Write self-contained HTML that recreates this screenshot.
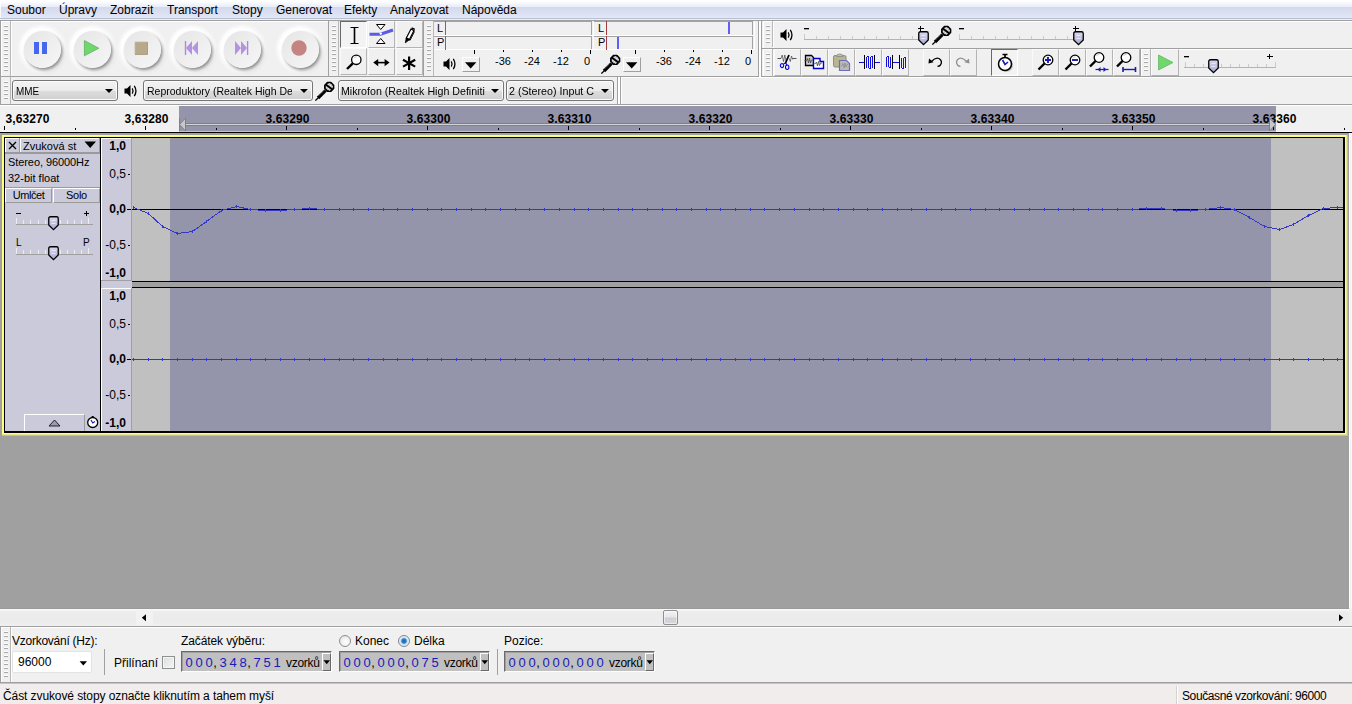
<!DOCTYPE html>
<html lang="cs">
<head>
<meta charset="utf-8">
<title>Audacity</title>
<style>
*{box-sizing:border-box;margin:0;padding:0}
html,body{width:1352px;height:704px;overflow:hidden;background:#f0f0f0;font-family:"Liberation Sans",sans-serif;font-size:12px;color:#000}
.a{position:absolute}
#menubar{left:0;top:0;width:1352px;height:19px;background:linear-gradient(#ffffff 0px,#fbfcfe 2px,#eff2fa 5px,#e8ecf7 7px,#d3d9ee 7px,#d8ddf0 11px,#e3e8f7 18px,#b9bfd3 18px,#b9bfd3 19px)}
#menubar span{position:absolute;top:3px;font-size:12px;white-space:nowrap;line-height:14px}
.tb{background:#f0f0f0;border-right:1px solid #a0a0a0;border-bottom:1px solid #a0a0a0}
.grab{background:repeating-linear-gradient(#ffffff 0,#ffffff 1px,#a8a8a8 1px,#a8a8a8 2px,#f0f0f0 2px,#f0f0f0 4px);}
.lbl{font-size:12px;white-space:nowrap;line-height:14px}
.combo{border:1px solid #757575;border-radius:3px;background:linear-gradient(#f2f2f2 0%,#ebebeb 50%,#dddddd 51%,#cfcfcf 100%);font-size:12px;line-height:17px;white-space:nowrap;overflow:hidden;padding-left:3px;box-shadow:inset 0 0 0 1px #fcfcfc}
.arrow{width:0;height:0;border-left:4px solid transparent;border-right:4px solid transparent;border-top:4px solid #000}
</style>
</head>
<body>
<!-- MENU -->
<div id="menubar" class="a">
<i class="a" style="left:0;top:0;width:1px;height:18px;background:rgba(255,255,255,.8)"></i><span style="left:7px">Soubor</span>
<span style="left:59px">Úpravy</span>
<span style="left:110px">Zobrazit</span>
<span style="left:167px">Transport</span>
<span style="left:232px">Stopy</span>
<span style="left:276px">Generovat</span>
<span style="left:344px">Efekty</span>
<span style="left:390px">Analyzovat</span>
<span style="left:462px">Nápověda</span>
</div>
<div class="a" style="left:0;top:19px;width:1352px;height:1px;background:#f0f0f0"></div>
<div class="a" style="left:0;top:20px;width:1352px;height:1px;background:#a0a0a0"></div>

<!-- TOOLBARS placeholder -->
<div id="toolbars" class="a" style="left:0;top:21px;width:1352px;height:83px">
<style>
.rb{position:absolute;width:52px;height:52px;border-radius:50%;background:radial-gradient(circle at 50% 50%,rgba(255,255,255,0) 0,rgba(255,255,255,0) 17.5px,rgba(255,255,255,.75) 20.5px,rgba(255,255,255,.5) 22.5px,rgba(255,255,255,.15) 24.5px,rgba(255,255,255,0) 26px)}
.rb i{position:absolute;left:8.3px;top:8.5px;width:37px;height:37px;border-radius:50%;background:linear-gradient(135deg,#e7e7e7 12%,#eeeeee 50%,#f4f4f4 88%);box-shadow:1.5px 2px 3px rgba(0,0,0,.36),3px 3.5px 4px rgba(0,0,0,.10),-2px -2px 2.5px 1.5px rgba(255,255,255,.85);filter:blur(.6px)}
.tbtn{position:absolute;width:27px;height:27px;background:#f0f0f0;border-right:1px solid #b4b4b4;border-bottom:1px solid #b4b4b4;border-left:1px solid #fafafa;border-top:1px solid #fafafa}
</style>
<!-- transport toolbar -->
<div class="a tb" style="left:0;top:0;width:329px;height:56px;border-left:1px solid #a0a0a0">
 <div class="a grab" style="left:3px;top:4px;width:4px;height:48px"></div>
 <div class="a" style="left:9px;top:0;width:1px;height:55px;background:#b8b8b8"></div>
 <div class="rb" style="left:14.5px;top:1.5px"><i></i></div>
 <div class="rb" style="left:64.5px;top:1.5px"><i></i></div>
 <div class="rb" style="left:114.5px;top:1.5px"><i></i></div>
 <div class="rb" style="left:164.5px;top:1.5px"><i></i></div>
 <div class="rb" style="left:215px;top:1.5px"><i></i></div>
 <div class="rb" style="left:272.5px;top:1.5px"><i></i></div>
<svg class="a" style="left:-1px;top:0" width="329" height="55">
<rect x="34" y="21" width="5" height="12" fill="#4667ec"/><rect x="42" y="21" width="5" height="12" fill="#4667ec"/>
<path d="M84.4 19.6 L98.8 27.200000000000003 L84.4 34.8 Z" fill="#70d66e" stroke="#5fb45e" stroke-width="0.8"/>
<rect x="135" y="21" width="12.5" height="12.5" fill="#b8a98c"/><path d="M135 33.5V21H147.5" stroke="#c6b89e" stroke-width="0.8" fill="none"/><path d="M135 33.5H147.5V21" stroke="#a39377" stroke-width="0.8" fill="none"/>
<path d="M185.5 20V34" stroke="#a989dc" stroke-width="1.4"/><path d="M192 20 L186 27 L192 34Z M198 20 L192 27 L198 34Z" fill="#b294e2"/>
<path d="M247.6 20V34" stroke="#a989dc" stroke-width="1.4"/><path d="M235 20 L241 27 L235 34Z M241 20 L247 27 L241 34Z" fill="#b294e2"/>
<circle cx="299" cy="27" r="7.7" fill="#c48482"/>
</svg>
</div>

<svg width="0" height="0" style="position:absolute"><defs><linearGradient id="tg" x1="0" y1="0" x2="0" y2="1"><stop offset="0" stop-color="#d8d8ee"/><stop offset="0.45" stop-color="#c4c4e2"/><stop offset="1" stop-color="#a8a8d2"/></linearGradient></defs></svg><style>.m11{font-size:11px;line-height:13px;white-space:nowrap}</style>
<div class="a" style="left:1px;top:0px;width:1px;height:55px;background:#fff"></div><div class="a" style="left:11px;top:0px;width:1px;height:55px;background:#fff"></div><div class="a" style="left:1px;top:0px;width:9px;height:1px;background:#fff"></div><div class="a" style="left:329px;top:0px;width:1px;height:55px;background:#fff"></div><div class="a" style="left:339px;top:0px;width:1px;height:55px;background:#fff"></div><div class="a" style="left:329px;top:0px;width:9px;height:1px;background:#fff"></div><div class="a" style="left:424px;top:0px;width:1px;height:55px;background:#fff"></div><div class="a" style="left:434px;top:0px;width:1px;height:55px;background:#fff"></div><div class="a" style="left:424px;top:0px;width:9px;height:1px;background:#fff"></div><div class="a" style="left:11px;top:0px;width:317px;height:1px;background:#fff"></div><div class="a" style="left:763px;top:0px;width:1px;height:27px;background:#fff"></div><div class="a" style="left:773px;top:0px;width:1px;height:27px;background:#fff"></div><div class="a" style="left:763px;top:0px;width:9px;height:1px;background:#fff"></div><div class="a" style="left:773px;top:0px;width:579px;height:1px;background:#fff"></div><div class="a" style="left:763px;top:28px;width:1px;height:27px;background:#fff"></div><div class="a" style="left:763px;top:28px;width:9px;height:1px;background:#fff"></div><div class="a" style="left:1141px;top:28px;width:1px;height:27px;background:#fff"></div><div class="a" style="left:1141px;top:28px;width:9px;height:1px;background:#fff"></div><div class="a" style="left:1179px;top:28px;width:173px;height:1px;background:#fff"></div><div class="a" style="left:1px;top:56px;width:1px;height:27px;background:#fff"></div><div class="a" style="left:11px;top:56px;width:1px;height:27px;background:#fff"></div><div class="a" style="left:1px;top:56px;width:9px;height:1px;background:#fff"></div><div class="a" style="left:11px;top:56px;width:607px;height:1px;background:#fff"></div>
<!-- tools toolbar -->
<div class="a tb" style="left:329px;top:0;width:95px;height:56px">
 <div class="a grab" style="left:3px;top:4px;width:4px;height:48px"></div>
 <div class="a" style="left:9px;top:0;width:1px;height:55px;background:#b8b8b8"></div>
</div>
<div class="tbtn" style="left:340px;top:0px;border-top:1px solid #696969;border-left:1px solid #696969;border-right:1px solid #fff;border-bottom:1px solid #fff;background:#f3f3f3"><svg class="a" style="left:-1px;top:-1px" width="27" height="27"><path d="M10.5 6.5h8M10.5 22.5h8" stroke="#000" stroke-width="1.2"/><path d="M14.5 6.5v16" stroke="#000" stroke-width="1.6"/></svg></div><div class="tbtn" style="left:368px;top:0px;"><svg class="a" style="left:-1px;top:-1px" width="27" height="27"><path d="M8.5 3.5h8.5l-4.25 5z M8.5 22.5h8.5l-4.25 -5z" fill="#fff" stroke="#000" stroke-width="1"/><path d="M1.5 13.3 H12.5 L25 9" stroke="#5c5ce0" stroke-width="3.1" fill="none"/><circle cx="12.8" cy="12.6" r="1.2" fill="#fff"/></svg></div><div class="tbtn" style="left:396px;top:0px;"><svg class="a" style="left:-1px;top:-1px" width="27" height="27"><path d="M10.3 17 L15 8 L18 9.6 L13.4 18.6 Z" fill="#fff" stroke="#000" stroke-width="1.2"/><path d="M9.3 21.8 L10.3 16.8 L13.6 18.6Z" fill="#000" stroke="#000" stroke-width="0.8"/><path d="M15.6 6.8 L18.8 8.4" stroke="#000" stroke-width="1.3"/><path d="M14 19.5 L18.5 10.5" stroke="#000" stroke-width="0.9"/></svg></div><div class="tbtn" style="left:340px;top:27px;"><svg class="a" style="left:-1px;top:-1px" width="27" height="27"><circle cx="16.3" cy="11.8" r="4.7" fill="#fff" stroke="#000" stroke-width="1.3"/><path d="M12.8 15.3 L7 21" stroke="#000" stroke-width="2.4"/><path d="M13.8 10.3 Q14.8 8.6 16.8 8.6" stroke="#bbb" stroke-width="0.8" fill="none"/></svg></div><div class="tbtn" style="left:368px;top:27px;"><svg class="a" style="left:-1px;top:-1px" width="27" height="27"><path d="M7 14.6 H20" stroke="#000" stroke-width="1.6"/><path d="M5.2 14.6 L10.2 11 V18.2Z M21.6 14.6 L16.6 11 V18.2Z" fill="#000"/></svg></div><div class="tbtn" style="left:396px;top:27px;"><svg class="a" style="left:-1px;top:-1px" width="27" height="27"><path d="M13.1 8.4 V22 M7 11.8 L19.2 18.6 M19.2 11.8 L7 18.6" stroke="#000" stroke-width="2.2"/></svg></div>
<!-- meter toolbar -->
<div class="a tb" style="left:424px;top:0;width:335px;height:56px">
 <div class="a grab" style="left:3px;top:4px;width:4px;height:48px"></div>
 <div class="a" style="left:9px;top:0;width:1px;height:55px;background:#b8b8b8"></div>
</div>
<div class="a" style="left:0;top:0"><div class="a" style="left:434px;top:0px;width:158px;height:1px;background:#a3a3a3"></div><div class="a" style="left:434px;top:14px;width:160px;height:1px;background:#fff"></div><div class="a" style="left:445px;top:0px;width:1px;height:14px;background:#2c9a2c"></div><div class="a" style="left:591px;top:1px;width:1px;height:13px;background:#a3a3a3"></div><div class="a" style="left:593px;top:1px;width:1px;height:14px;background:#fff"></div><div class="a" style="left:434px;top:15px;width:158px;height:1px;background:#a3a3a3"></div><div class="a" style="left:434px;top:28px;width:160px;height:1px;background:#fff"></div><div class="a" style="left:445px;top:15px;width:1px;height:14px;background:#2c9a2c"></div><div class="a" style="left:591px;top:16px;width:1px;height:12px;background:#a3a3a3"></div><div class="a" style="left:593px;top:16px;width:1px;height:13px;background:#fff"></div><div class="a m11" style="left:437px;top:1px">L</div><div class="a m11" style="left:437px;top:15px">P</div><div class="a" style="left:474px;top:29px;width:1px;height:4px;background:#000"></div><div class="a" style="left:503px;top:29px;width:1px;height:2px;background:#000"></div><div class="a m11" style="left:494px;top:34px;width:18px;text-align:center">-36</div><div class="a" style="left:532px;top:29px;width:1px;height:2px;background:#000"></div><div class="a m11" style="left:523px;top:34px;width:18px;text-align:center">-24</div><div class="a" style="left:561px;top:29px;width:1px;height:2px;background:#000"></div><div class="a m11" style="left:552px;top:34px;width:18px;text-align:center">-12</div><div class="a" style="left:590px;top:29px;width:1px;height:4px;background:#000"></div><div class="a m11" style="left:584px;top:34px">0</div><svg class="a" style="left:443px;top:36px" width="14" height="14" viewBox="0 0 14 14"><path d="M0.5 4.5 H3 L6.5 1 V13 L3 9.5 H0.5Z" fill="#000"/><path d="M8.3 4.4 Q9.8 7 8.3 9.6" stroke="#000" stroke-width="1.2" fill="none"/><path d="M10.3 1.8 Q13.6 7 10.3 12.2" stroke="#000" stroke-width="1.3" fill="none"/></svg><div class="a" style="left:462px;top:36px;width:18px;height:15px;border-top:1px solid #fff;border-left:1px solid #fff;border-right:1px solid #a0a0a0;border-bottom:1px solid #a0a0a0"><svg class="a" style="left:2px;top:4px" width="12" height="7"><path d="M0 0.3 H11.4 L5.7 6.4Z" fill="#000"/></svg></div><div class="a" style="left:594px;top:0px;width:159px;height:1px;background:#a3a3a3"></div><div class="a" style="left:594px;top:14px;width:161px;height:1px;background:#fff"></div><div class="a" style="left:606px;top:0px;width:1px;height:14px;background:#a33c3c"></div><div class="a" style="left:752px;top:1px;width:1px;height:13px;background:#a3a3a3"></div><div class="a" style="left:754px;top:1px;width:1px;height:14px;background:#fff"></div><div class="a" style="left:594px;top:15px;width:159px;height:1px;background:#a3a3a3"></div><div class="a" style="left:594px;top:28px;width:161px;height:1px;background:#fff"></div><div class="a" style="left:606px;top:15px;width:1px;height:14px;background:#a33c3c"></div><div class="a" style="left:752px;top:16px;width:1px;height:12px;background:#a3a3a3"></div><div class="a" style="left:754px;top:16px;width:1px;height:13px;background:#fff"></div><div class="a m11" style="left:598px;top:1px">L</div><div class="a m11" style="left:598px;top:15px">P</div><div class="a" style="left:635px;top:29px;width:1px;height:4px;background:#000"></div><div class="a" style="left:664px;top:29px;width:1px;height:2px;background:#000"></div><div class="a m11" style="left:655px;top:34px;width:18px;text-align:center">-36</div><div class="a" style="left:693px;top:29px;width:1px;height:2px;background:#000"></div><div class="a m11" style="left:684px;top:34px;width:18px;text-align:center">-24</div><div class="a" style="left:722px;top:29px;width:1px;height:2px;background:#000"></div><div class="a m11" style="left:713px;top:34px;width:18px;text-align:center">-12</div><div class="a" style="left:751px;top:29px;width:1px;height:4px;background:#000"></div><div class="a m11" style="left:745px;top:34px">0</div><svg class="a" style="left:601px;top:33px" width="20" height="20" viewBox="0 0 20 20"><path d="M12.5 1.7 h3.4 l2.6 2.6 v3.2 l-2.6 2.6 h-3.4 l-2.6 -2.6 v-3.2z" fill="#c4c4c4" stroke="#000" stroke-width="1.7" stroke-linejoin="round"/><path d="M13.2 3.6 l1.6 -1.2 M15 5 l1.6 -1.4 M16.6 6.4 l1.2 -1 M11.2 7 l1.2 -1.1 M12.8 8.4 l1.4 -1.2 M14.2 9.6 l1 -0.8" stroke="#f4f4f4" stroke-width="0.9"/><path d="M10.8 3.4 L17.4 8.4" stroke="#000" stroke-width="1.9"/><path d="M10.6 9.4 L3 17" stroke="#000" stroke-width="3.3"/><path d="M9.6 8.6 L4 14.4" stroke="#fff" stroke-width="0.8" stroke-dasharray="0.9 0.9"/><path d="M3.6 16.4 L0.4 19.6" stroke="#000" stroke-width="1.3"/></svg><div class="a" style="left:623px;top:36px;width:18px;height:15px;border-top:1px solid #fff;border-left:1px solid #fff;border-right:1px solid #a0a0a0;border-bottom:1px solid #a0a0a0"><svg class="a" style="left:2px;top:4px" width="12" height="7"><path d="M0 0.3 H11.4 L5.7 6.4Z" fill="#000"/></svg></div>
<div class="a" style="left:617px;top:16px;width:2px;height:12px;background:#5e5eff"></div>
<div class="a" style="left:728px;top:1px;width:2px;height:12px;background:#5e5eff"></div>
</div>
<div class="a" style="left:759px;top:0;width:2px;height:56px;background:#fff"></div>
<div class="a" style="left:761px;top:0;width:1px;height:56px;background:#a0a0a0"></div>
<!-- mixer toolbar -->
<div class="a" style="left:762px;top:0;width:590px;height:28px;border-bottom:1px solid #a0a0a0">
 <div class="a grab" style="left:4px;top:4px;width:4px;height:19px"></div>
 <div class="a" style="left:10px;top:0;width:1px;height:26px;background:#b8b8b8"></div>
</div>
<svg class="a" style="left:780px;top:7px" width="14" height="14" viewBox="0 0 14 14"><path d="M0.5 4.5 H3 L6.5 1 V13 L3 9.5 H0.5Z" fill="#000"/><path d="M8.3 4.4 Q9.8 7 8.3 9.6" stroke="#000" stroke-width="1.2" fill="none"/><path d="M10.3 1.8 Q13.6 7 10.3 12.2" stroke="#000" stroke-width="1.3" fill="none"/></svg>
<div class="a" style="left:804px;top:7px;width:5px;height:1px;background:#000;box-shadow:0 0.5px 0 #555"></div>
<div class="a" style="left:804px;top:18px;width:117px;height:1px;background:#b4b4b4"></div>
<div class="a" style="left:804px;top:13px;width:1px;height:5px;background:#cbcbcb"></div><div class="a" style="left:816px;top:15px;width:1px;height:3px;background:#cbcbcb"></div><div class="a" style="left:828px;top:15px;width:1px;height:3px;background:#cbcbcb"></div><div class="a" style="left:840px;top:15px;width:1px;height:3px;background:#cbcbcb"></div><div class="a" style="left:852px;top:15px;width:1px;height:3px;background:#cbcbcb"></div><div class="a" style="left:864px;top:15px;width:1px;height:3px;background:#cbcbcb"></div><div class="a" style="left:876px;top:15px;width:1px;height:3px;background:#cbcbcb"></div><div class="a" style="left:888px;top:15px;width:1px;height:3px;background:#cbcbcb"></div><div class="a" style="left:900px;top:15px;width:1px;height:3px;background:#cbcbcb"></div><div class="a" style="left:912px;top:15px;width:1px;height:3px;background:#cbcbcb"></div>
<svg class="a" style="left:918px;top:4px" width="6" height="6"><path d="M0 3.5h6M2.5 1v5" stroke="#000" stroke-width="1" shape-rendering="crispEdges"/></svg>
<svg class="a" style="left:918px;top:10px" width="12" height="15" viewBox="0 0 12 15"><path d="M2.5 0.75 H8.5 Q10.25 0.75 10.25 2.5 V9 L5.5 13.6 L0.75 9 V2.5 Q0.75 0.75 2.5 0.75Z" fill="url(#tg)" stroke="#000" stroke-width="1.3"/><path d="M3.5 4.5h4M3.5 7.5h4" stroke="#e8e8f6" stroke-width="1"/></svg><svg class="a" style="left:932px;top:4px" width="20" height="20" viewBox="0 0 20 20"><path d="M12.5 1.7 h3.4 l2.6 2.6 v3.2 l-2.6 2.6 h-3.4 l-2.6 -2.6 v-3.2z" fill="#c4c4c4" stroke="#000" stroke-width="1.7" stroke-linejoin="round"/><path d="M13.2 3.6 l1.6 -1.2 M15 5 l1.6 -1.4 M16.6 6.4 l1.2 -1 M11.2 7 l1.2 -1.1 M12.8 8.4 l1.4 -1.2 M14.2 9.6 l1 -0.8" stroke="#f4f4f4" stroke-width="0.9"/><path d="M10.8 3.4 L17.4 8.4" stroke="#000" stroke-width="1.9"/><path d="M10.6 9.4 L3 17" stroke="#000" stroke-width="3.3"/><path d="M9.6 8.6 L4 14.4" stroke="#fff" stroke-width="0.8" stroke-dasharray="0.9 0.9"/><path d="M3.6 16.4 L0.4 19.6" stroke="#000" stroke-width="1.3"/></svg>
<div class="a" style="left:959px;top:7px;width:5px;height:1px;background:#000;box-shadow:0 0.5px 0 #555"></div>
<div class="a" style="left:959px;top:18px;width:117px;height:1px;background:#b4b4b4"></div>
<div class="a" style="left:959px;top:13px;width:1px;height:5px;background:#cbcbcb"></div><div class="a" style="left:971px;top:15px;width:1px;height:3px;background:#cbcbcb"></div><div class="a" style="left:983px;top:15px;width:1px;height:3px;background:#cbcbcb"></div><div class="a" style="left:995px;top:15px;width:1px;height:3px;background:#cbcbcb"></div><div class="a" style="left:1007px;top:15px;width:1px;height:3px;background:#cbcbcb"></div><div class="a" style="left:1019px;top:15px;width:1px;height:3px;background:#cbcbcb"></div><div class="a" style="left:1031px;top:15px;width:1px;height:3px;background:#cbcbcb"></div><div class="a" style="left:1043px;top:15px;width:1px;height:3px;background:#cbcbcb"></div><div class="a" style="left:1055px;top:15px;width:1px;height:3px;background:#cbcbcb"></div><div class="a" style="left:1067px;top:15px;width:1px;height:3px;background:#cbcbcb"></div>
<svg class="a" style="left:1073px;top:4px" width="6" height="6"><path d="M0 3.5h6M2.5 1v5" stroke="#000" stroke-width="1" shape-rendering="crispEdges"/></svg>
<svg class="a" style="left:1073px;top:10px" width="12" height="15" viewBox="0 0 12 15"><path d="M2.5 0.75 H8.5 Q10.25 0.75 10.25 2.5 V9 L5.5 13.6 L0.75 9 V2.5 Q0.75 0.75 2.5 0.75Z" fill="url(#tg)" stroke="#000" stroke-width="1.3"/><path d="M3.5 4.5h4M3.5 7.5h4" stroke="#e8e8f6" stroke-width="1"/></svg>
<!-- edit toolbar -->
<div class="a" style="left:762px;top:28px;width:379px;height:28px;border-bottom:1px solid #a0a0a0;border-right:1px solid #a0a0a0">
 <div class="a grab" style="left:4px;top:4px;width:4px;height:20px"></div>
 <div class="a" style="left:10px;top:0;width:1px;height:28px;background:#b8b8b8"></div>
</div>
<div class="tbtn" style="left:774px;top:28px;"><svg class="a" style="left:-2px;top:-2px" width="27" height="27"><path d="M4.5 10.5 H8" stroke="#555" stroke-width="1"/><path d="M19.5 10.5 H23.5" stroke="#555" stroke-width="1"/><path d="M8 10.5 l1.2 -3.5 l1.3 6.5 l1.3 -6.5 l1.2 5.5 M16.3 10.5 l1 3 l1.2 -5.5 l1.2 3.5" stroke="#444" stroke-width="0.7" fill="none"/><path d="M16 7 L12.5 15" stroke="#000" stroke-width="1.8"/><ellipse cx="9" cy="17.6" rx="1.7" ry="2" fill="none" stroke="#0000d8" stroke-width="1.05"/><ellipse cx="14.2" cy="19.2" rx="1.7" ry="2.2" fill="none" stroke="#0000d8" stroke-width="1.05"/><path d="M12.5 15 L10.5 16 M12.8 15 L13.8 17" stroke="#0000d8" stroke-width="1.1"/></svg></div><div class="tbtn" style="left:801px;top:28px;"><svg class="a" style="left:-2px;top:-2px" width="27" height="27"><path d="M5.5 7.5 H11.5 L13.5 9.5 V17.5 H5.5Z" fill="#cfcfcf" stroke="#000" stroke-width="1.3"/><path d="M4.5 12.5 h2 l1 -2 l1 4.5 l1 -5 l1 5 l1 -3 h1" stroke="#444" stroke-width="0.8" fill="none"/><path d="M13.5 10.5 H20 V13.5 H23.5 V20.5 H13.5Z" fill="#fff" stroke="#0000d0" stroke-width="1.4"/><path d="M14.5 15.5 h1 l1 -1.5 l1 4 l1 -4.5 l1 4 l1 -2.5 h1.5" stroke="#444" stroke-width="0.8" fill="none"/></svg></div><div class="tbtn" style="left:828px;top:28px;"><svg class="a" style="left:-2px;top:-2px" width="27" height="27"><rect x="6.5" y="7.5" width="12.5" height="11.5" rx="1.5" fill="#b9b58f" stroke="#8c8c8c" stroke-width="1"/><path d="M9.5 8.5 Q9.5 6 12.7 6 Q16 6 16 8.5Z" fill="#c9c38a" stroke="#8c8c8c" stroke-width="0.9"/><path d="M12.5 12.5 H19.5 L22.5 15.5 V22.5 H12.5Z" fill="#b9b9b9" stroke="#6e6eb4" stroke-width="1.2"/><path d="M14 17.5 h1 l1 -2 l1 4.5 l1 -5 l1 4 l1 -2.5 h1" stroke="#8e8e8e" stroke-width="0.8" fill="none"/></svg></div><div class="tbtn" style="left:855px;top:28px;"><svg class="a" style="left:-2px;top:-2px" width="27" height="27"><g shape-rendering="crispEdges"><path d="M5 14.5H10 M21 14.5H26" stroke="#1010d8" stroke-width="1"/><path d="M12.5 9V20M12.5 8.5H14.5M14.5 9V20M14.5 20.5H16.5M16.5 9V20M16.5 8.5H18.5M18.5 9V20" stroke="#1010d8" stroke-width="1" fill="none"/><path d="M10.5 7V21M20.5 7V21" stroke="#000" stroke-width="1.5"/></g></svg></div><div class="tbtn" style="left:882px;top:28px;"><svg class="a" style="left:-2px;top:-2px" width="27" height="27"><g shape-rendering="crispEdges"><path d="M12 14.5H18" stroke="#1010d8" stroke-width="1"/><path d="M5.5 9V19M5.5 8.5H7.5M7.5 9V19M7.5 19.5H9.5M9.5 9V19M20.5 10V20M20.5 20.5H22.5M22.5 10V20M22.5 9.5H24.5M24.5 10V20" stroke="#1010d8" stroke-width="1" fill="none"/><path d="M11.5 7V21M18.5 7V21" stroke="#000" stroke-width="1.5"/></g></svg></div><div class="tbtn" style="left:923px;top:28px;"><svg class="a" style="left:-1px;top:-2px" width="27" height="27"><path d="M8.5 13.5 Q12.5 9 16 10.5 Q20 13 17.5 17 Q16.5 18.3 14.5 18.3" stroke="#000" stroke-width="1.3" fill="none"/><path d="M5.5 15.5 L6 10.5 L10.5 14.2Z" fill="#000"/></svg></div><div class="tbtn" style="left:950px;top:28px;"><svg class="a" style="left:-1px;top:-2px" width="27" height="27"><g transform="translate(-2,0)"><path d="M18.5 13.5 Q14.5 9 11 10.5 Q7 13 9.5 17 Q10.5 18.3 12.5 18.3" stroke="#909090" stroke-width="1.3" fill="none"/><path d="M21.5 15.5 L21 10.5 L16.5 14.2Z" fill="#909090"/></g></svg></div><div class="tbtn" style="left:991px;top:28px;border-top:1px solid #696969;border-left:1px solid #696969;border-right:1px solid #fff;border-bottom:1px solid #fff;background:#f3f3f3"><svg class="a" style="left:-1px;top:-2px" width="27" height="27"><circle cx="15.3" cy="17.3" r="6.8" fill="#c8c8c8"/><circle cx="14" cy="16" r="6.5" fill="#fff" stroke="#000" stroke-width="1.5"/><path d="M11.5 6.5 H16.5 M14 6.5 V9.5" stroke="#000" stroke-width="1.7"/><path d="M11.5 12 L14 16.5 L17 14" stroke="#1a1ab8" stroke-width="1.6" fill="none"/></svg></div><div class="tbtn" style="left:1032px;top:28px;"><svg class="a" style="left:-1px;top:-2px" width="27" height="27"><g transform="translate(-0.5,2)"><circle cx="16.5" cy="10" r="4.8" fill="#fff" stroke="#000" stroke-width="1.3"/><path d="M13 13.5 L7 19.5" stroke="#000" stroke-width="2.4"/><path d="M14 8.5 Q15 6.8 17 6.8" stroke="#bbb" stroke-width="0.8" fill="none"/><path d="M13.5 10 H19.5 M16.5 7 V13" stroke="#1a1ab0" stroke-width="1.9"/></g></svg></div><div class="tbtn" style="left:1059px;top:28px;"><svg class="a" style="left:-1px;top:-2px" width="27" height="27"><g transform="translate(-0.5,2)"><circle cx="16.5" cy="10" r="4.8" fill="#fff" stroke="#000" stroke-width="1.3"/><path d="M13 13.5 L7 19.5" stroke="#000" stroke-width="2.4"/><path d="M14 8.5 Q15 6.8 17 6.8" stroke="#bbb" stroke-width="0.8" fill="none"/><path d="M13.5 10 H19.5" stroke="#1a1ab0" stroke-width="1.9"/></g></svg></div><div class="tbtn" style="left:1086px;top:28px;"><svg class="a" style="left:-1px;top:-2px" width="27" height="27"><g transform="translate(-0.5,1)"><circle cx="13.5" cy="8.5" r="4.8" fill="#fff" stroke="#000" stroke-width="1.3"/><path d="M10 12 L4.5 17.5" stroke="#000" stroke-width="2.4"/><path d="M11 7 Q12 5.3 14 5.3" stroke="#bbb" stroke-width="0.8" fill="none"/><path d="M10 20.5 H23" stroke="#1a1ab0" stroke-width="1.2"/><path d="M12 20.5 L15 18 V23Z M21 20.5 L18 18 V23Z" fill="#1a1ab0"/></g></svg></div><div class="tbtn" style="left:1113px;top:28px;"><svg class="a" style="left:-1px;top:-2px" width="27" height="27"><g transform="translate(-0.5,1)"><circle cx="13.5" cy="8.5" r="4.8" fill="#fff" stroke="#000" stroke-width="1.3"/><path d="M10 12 L4.5 17.5" stroke="#000" stroke-width="2.4"/><path d="M11 7 Q12 5.3 14 5.3" stroke="#bbb" stroke-width="0.8" fill="none"/><path d="M10.5 20.5 H23" stroke="#1a1ab0" stroke-width="1.4"/><path d="M10.5 18 V23 M23 18 V23" stroke="#1a1ab0" stroke-width="1.6"/></g></svg></div>
<div class="a" style="left:773px;top:28px;width:1px;height:27px;background:#fafafa"></div>
<!-- transcription toolbar -->
<div class="a" style="left:1141px;top:28px;width:211px;height:28px;border-bottom:1px solid #a0a0a0">
 <div class="a grab" style="left:3px;top:4px;width:4px;height:20px"></div>
 <div class="a" style="left:9px;top:0;width:1px;height:28px;background:#b8b8b8"></div>
</div>
<div class="tbtn" style="left:1151px;top:28px;width:28px"><svg class="a" style="left:-1px;top:-1px" width="27" height="27"><path d="M7.5 6 L22 13.5 L7.5 21Z" fill="#70d66e" stroke="#62b961" stroke-width="0.8"/></svg></div>
<div class="a" style="left:1184px;top:35px;width:5px;height:1px;background:#000;box-shadow:0 0.5px 0 #555"></div>
<div class="a" style="left:1184px;top:46px;width:92px;height:1px;background:#b4b4b4"></div>
<div class="a" style="left:1185px;top:41px;width:1px;height:5px;background:#cbcbcb"></div><div class="a" style="left:1194px;top:43px;width:1px;height:3px;background:#cbcbcb"></div><div class="a" style="left:1203px;top:43px;width:1px;height:3px;background:#cbcbcb"></div><div class="a" style="left:1212px;top:43px;width:1px;height:3px;background:#cbcbcb"></div><div class="a" style="left:1221px;top:43px;width:1px;height:3px;background:#cbcbcb"></div><div class="a" style="left:1230px;top:43px;width:1px;height:3px;background:#cbcbcb"></div><div class="a" style="left:1239px;top:43px;width:1px;height:3px;background:#cbcbcb"></div><div class="a" style="left:1248px;top:43px;width:1px;height:3px;background:#cbcbcb"></div><div class="a" style="left:1257px;top:43px;width:1px;height:3px;background:#cbcbcb"></div><div class="a" style="left:1266px;top:43px;width:1px;height:3px;background:#cbcbcb"></div><div class="a" style="left:1275px;top:41px;width:1px;height:5px;background:#cbcbcb"></div>
<svg class="a" style="left:1267px;top:32px" width="6" height="6"><path d="M0 3.5h6M2.5 1v5" stroke="#000" stroke-width="1" shape-rendering="crispEdges"/></svg>
<svg class="a" style="left:1208px;top:38px" width="12" height="15" viewBox="0 0 12 15"><path d="M2.5 0.75 H8.5 Q10.25 0.75 10.25 2.5 V9 L5.5 13.6 L0.75 9 V2.5 Q0.75 0.75 2.5 0.75Z" fill="url(#tg)" stroke="#000" stroke-width="1.3"/><path d="M3.5 4.5h4M3.5 7.5h4" stroke="#e8e8f6" stroke-width="1"/></svg>
<!-- device toolbar -->
<div class="a tb" style="left:0;top:56px;width:618px;height:28px;border-left:1px solid #a0a0a0">
 <div class="a grab" style="left:3px;top:4px;width:4px;height:20px"></div>
 <div class="a" style="left:9px;top:0;width:1px;height:27px;background:#b8b8b8"></div>
</div>
<div class="a" style="left:618px;top:56px;width:2px;height:27px;background:#fff"></div><div class="a" style="left:620px;top:56px;width:1px;height:27px;background:#a0a0a0"></div><div class="a" style="left:621px;top:56px;width:1px;height:27px;background:#fff"></div><div class="a" style="left:621px;top:56px;width:731px;height:1px;background:#fff"></div>
<div class="a" style="left:619px;top:83px;width:733px;height:1px;background:#a0a0a0"></div>
<div class="a combo" style="left:12px;top:59px;width:106px;height:21px;font-size:11.5px;line-height:20px;padding-left:3px"><div style="width:60px;overflow:hidden"><span style="display:inline-block;transform:scaleX(0.861);transform-origin:0 50%">MME</span></div><div class="a arrow" style="right:4px;top:8px"></div></div>
<svg class="a" style="left:124px;top:63px" width="14" height="14" viewBox="0 0 14 14"><path d="M0.5 4.5 H3 L6.5 1 V13 L3 9.5 H0.5Z" fill="#000"/><path d="M8.3 4.4 Q9.8 7 8.3 9.6" stroke="#000" stroke-width="1.2" fill="none"/><path d="M10.3 1.8 Q13.6 7 10.3 12.2" stroke="#000" stroke-width="1.3" fill="none"/></svg>
<div class="a combo" style="left:143px;top:59px;width:170px;height:21px;font-size:11.5px;line-height:20px;padding-left:3px"><div style="width:145px;overflow:hidden"><span style="display:inline-block;transform:scaleX(0.913);transform-origin:0 50%">Reproduktory (Realtek High De</span></div><div class="a arrow" style="right:4px;top:8px"></div></div>
<svg class="a" style="left:315px;top:60px" width="20" height="20" viewBox="0 0 20 20"><path d="M12.5 1.7 h3.4 l2.6 2.6 v3.2 l-2.6 2.6 h-3.4 l-2.6 -2.6 v-3.2z" fill="#c4c4c4" stroke="#000" stroke-width="1.7" stroke-linejoin="round"/><path d="M13.2 3.6 l1.6 -1.2 M15 5 l1.6 -1.4 M16.6 6.4 l1.2 -1 M11.2 7 l1.2 -1.1 M12.8 8.4 l1.4 -1.2 M14.2 9.6 l1 -0.8" stroke="#f4f4f4" stroke-width="0.9"/><path d="M10.8 3.4 L17.4 8.4" stroke="#000" stroke-width="1.9"/><path d="M10.6 9.4 L3 17" stroke="#000" stroke-width="3.3"/><path d="M9.6 8.6 L4 14.4" stroke="#fff" stroke-width="0.8" stroke-dasharray="0.9 0.9"/><path d="M3.6 16.4 L0.4 19.6" stroke="#000" stroke-width="1.3"/></svg>
<div class="a combo" style="left:338px;top:59px;width:166px;height:21px;font-size:11.5px;line-height:20px;padding-left:2px"><div style="width:150px;overflow:hidden"><span style="display:inline-block;transform:scaleX(0.926);transform-origin:0 50%">Mikrofon (Realtek High Definiti</span></div><div class="a arrow" style="right:4px;top:8px"></div></div>
<div class="a combo" style="left:506px;top:59px;width:108px;height:21px;font-size:11.5px;line-height:20px;padding-left:2px"><div style="width:85.5px;overflow:hidden"><span style="display:inline-block;transform:scaleX(0.930);transform-origin:0 50%">2 (Stereo) Input C</span></div><div class="a arrow" style="right:4px;top:8px"></div></div>
</div>

<!-- RULER -->
<style>.rl{font-weight:bold;font-size:12px;line-height:14px;white-space:nowrap;letter-spacing:0.1px;margin-left:0.5px}</style><div id="ruler" class="a" style="left:0;top:104px;width:1352px;height:29px"><div class="a" style="left:0;top:0;width:1352px;height:1px;background:#a0a0a0"></div><div class="a" style="left:0;top:1px;width:1352px;height:1px;background:#fff"></div><div class="a" style="left:0;top:28px;width:1352px;height:1px;background:#000"></div><div class="a" style="left:0;top:27px;width:1352px;height:1px;background:rgba(255,255,255,.45);z-index:3"></div><div class="a" style="left:179px;top:2px;width:1097px;height:26px;background:#9494aa"></div><div class="a" style="left:4px;top:22px;width:1px;height:4px;background:#000"></div><div class="a" style="left:75px;top:24px;width:1px;height:2px;background:#000"></div><div class="a" style="left:145px;top:22px;width:1px;height:4px;background:#000"></div><div class="a" style="left:216px;top:24px;width:1px;height:2px;background:#000"></div><div class="a" style="left:286px;top:22px;width:1px;height:4px;background:#000"></div><div class="a" style="left:357px;top:24px;width:1px;height:2px;background:#000"></div><div class="a" style="left:427px;top:22px;width:1px;height:4px;background:#000"></div><div class="a" style="left:498px;top:24px;width:1px;height:2px;background:#000"></div><div class="a" style="left:568px;top:22px;width:1px;height:4px;background:#000"></div><div class="a" style="left:639px;top:24px;width:1px;height:2px;background:#000"></div><div class="a" style="left:709px;top:22px;width:1px;height:4px;background:#000"></div><div class="a" style="left:780px;top:24px;width:1px;height:2px;background:#000"></div><div class="a" style="left:850px;top:22px;width:1px;height:4px;background:#000"></div><div class="a" style="left:921px;top:24px;width:1px;height:2px;background:#000"></div><div class="a" style="left:991px;top:22px;width:1px;height:4px;background:#000"></div><div class="a" style="left:1062px;top:24px;width:1px;height:2px;background:#000"></div><div class="a" style="left:1132px;top:22px;width:1px;height:4px;background:#000"></div><div class="a" style="left:1203px;top:24px;width:1px;height:2px;background:#000"></div><div class="a" style="left:1273px;top:22px;width:1px;height:4px;background:#000"></div><div class="a" style="left:1344px;top:24px;width:1px;height:2px;background:#000"></div><div class="a rl" style="left:5px;top:8px">3,63270</div><div class="a rl" style="left:124px;top:8px">3,63280</div><div class="a rl" style="left:265px;top:8px">3.63290</div><div class="a rl" style="left:406px;top:8px">3.63300</div><div class="a rl" style="left:547px;top:8px">3.63310</div><div class="a rl" style="left:688px;top:8px">3.63320</div><div class="a rl" style="left:829px;top:8px">3.63330</div><div class="a rl" style="left:970px;top:8px">3.63340</div><div class="a rl" style="left:1111px;top:8px">3.63350</div><div class="a rl" style="left:1252px;top:8px">3.63360</div><svg class="a" style="left:179px;top:14px" width="1097" height="14" shape-rendering="crispEdges"><rect x="6" y="5" width="1086" height="3" fill="#808080"/><rect x="6" y="6" width="1086" height="1" fill="#d4d4d4"/><rect x="0" y="0" width="1" height="14" fill="#808080"/><path d="M6.5 0 V13 L0.5 6.5Z" fill="#c8c8c8" stroke="#808080" stroke-width="1" shape-rendering="auto"/><path d="M1090.5 0 V13 L1096.5 6.5Z" fill="#c8c8c8" stroke="#808080" stroke-width="1" shape-rendering="auto"/></svg></div>

<!-- TRACK AREA -->
<style>.vl{font-size:12px;line-height:14px;text-align:right;white-space:nowrap}.il{font-size:11px;line-height:13px;white-space:nowrap}.ib{font-size:11px;line-height:13px;text-align:center;border-top:1px solid #fff;border-left:1px solid #fff;border-right:1px solid #9a9a9a;border-bottom:1px solid #9a9a9a;white-space:nowrap}</style><div id="trackarea" class="a" style="left:0;top:133px;width:1352px;height:475px;background:#a0a0a0;overflow:hidden"><div class="a" style="left:2px;top:2px;width:1346px;height:301px;background:#c2c296"></div><div class="a" style="left:2px;top:2px;width:1345px;height:300px;background:#e8e88a"></div><div class="a" style="left:2px;top:2px;width:1344px;height:299px;background:#ffff7e"></div><div class="a" style="left:4px;top:4px;width:1341px;height:296px;background:#000"></div><div class="a" style="left:5px;top:5px;width:95px;height:293px;background:#cacadb"></div><div class="a" style="left:101px;top:5px;width:31px;height:293px;background:#cacadb"></div><div class="a" style="left:131px;top:5px;width:1px;height:143px;background:#a0a0a0"></div><div class="a" style="left:131px;top:155px;width:1px;height:143px;background:#a0a0a0"></div><div class="a" style="left:101px;top:5px;width:30px;height:1px;background:#fff"></div><div class="a" style="left:101px;top:5px;width:1px;height:143px;background:#fff"></div><div class="a" style="left:101px;top:147px;width:30px;height:1px;background:#a0a0a0"></div><div class="a" style="left:101px;top:155px;width:30px;height:1px;background:#fff"></div><div class="a" style="left:101px;top:155px;width:1px;height:143px;background:#fff"></div><div class="a" style="left:132px;top:5px;width:1211px;height:143px;background:#c0c0c0"></div><div class="a" style="left:170px;top:5px;width:1101px;height:143px;background:#9494aa"></div><div class="a" style="left:132px;top:155px;width:1211px;height:143px;background:#c0c0c0"></div><div class="a" style="left:170px;top:155px;width:1101px;height:143px;background:#9494aa"></div><div class="a" style="left:132px;top:148px;width:1211px;height:7px;background:#000"></div><div class="a" style="left:132px;top:149px;width:1211px;height:5px;background:#a0a0a0"></div><div class="a vl" style="left:100px;width:26px;top:6px;font-weight:bold;">1,0</div><div class="a vl" style="left:100px;width:26px;top:34px;">0,5</div><div class="a vl" style="left:100px;width:26px;top:69px;font-weight:bold;">0,0</div><div class="a vl" style="left:100px;width:26px;top:105px;">-0,5</div><div class="a vl" style="left:100px;width:26px;top:133px;font-weight:bold;">-1,0</div><div class="a" style="left:128px;top:41px;width:2px;height:1px;background:#000"></div><div class="a" style="left:128px;top:112px;width:2px;height:1px;background:#000"></div><div class="a" style="left:127px;top:76px;width:4px;height:1px;background:#000"></div><div class="a vl" style="left:100px;width:26px;top:156px;font-weight:bold;">1,0</div><div class="a vl" style="left:100px;width:26px;top:184px;">0,5</div><div class="a vl" style="left:100px;width:26px;top:219px;font-weight:bold;">0,0</div><div class="a vl" style="left:100px;width:26px;top:255px;">-0,5</div><div class="a vl" style="left:100px;width:26px;top:283px;font-weight:bold;">-1,0</div><div class="a" style="left:128px;top:191px;width:2px;height:1px;background:#000"></div><div class="a" style="left:128px;top:262px;width:2px;height:1px;background:#000"></div><div class="a" style="left:127px;top:226px;width:4px;height:1px;background:#000"></div><svg class="a" style="left:132px;top:5px" width="1211" height="143"><rect x="0" y="71" width="1211" height="1" fill="#000" shape-rendering="crispEdges"/><polyline points="1.5,69.5 16.5,75.5 30.5,88.5 45.5,95.5 60.5,93.5 74.5,83.5 89.5,72.5 104.5,68.5 118.5,71.5 133.5,72.5 148.5,72.5 162.5,71.5 177.5,70.5 192.5,71.5 207.5,71.5 221.5,71.5 236.5,71.5 251.5,71.5 265.5,71.5 280.5,71.5 295.5,71.5 309.5,71.5 324.5,71.5 339.5,71.5 353.5,71.5 368.5,71.5 383.5,71.5 397.5,71.5 412.5,71.5 427.5,71.5 442.5,71.5 456.5,71.5 471.5,71.5 486.5,71.5 500.5,71.5 515.5,71.5 530.5,71.5 544.5,71.5 559.5,71.5 574.5,71.5 588.5,71.5 603.5,71.5 618.5,71.5 632.5,71.5 647.5,71.5 662.5,71.5 677.5,71.5 691.5,71.5 706.5,71.5 721.5,71.5 735.5,71.5 750.5,71.5 765.5,71.5 779.5,71.5 794.5,71.5 809.5,71.5 823.5,71.5 838.5,71.5 853.5,71.5 867.5,71.5 882.5,71.5 897.5,71.5 912.5,71.5 926.5,71.5 941.5,71.5 956.5,71.5 970.5,71.5 985.5,71.5 1000.5,71.5 1014.5,70.5 1029.5,70.5 1044.5,72.5 1058.5,72.5 1073.5,71.5 1088.5,69.5 1102.5,71.5 1117.5,79.5 1132.5,88.5 1147.5,91.5 1161.5,86.5 1176.5,77.5 1191.5,70.5 1205.5,69.5 1211.5,69.5" fill="none" stroke="#3438c6" stroke-width="1" shape-rendering="crispEdges"/><path d="M1.5 68v3M16.5 74v3M30.5 87v3M45.5 94v3M60.5 92v3M74.5 82v3M89.5 71v3M104.5 67v3M118.5 70v3M133.5 71v3M148.5 71v3M162.5 70v3M177.5 69v3M192.5 70v3M207.5 70v3M221.5 70v3M236.5 70v3M251.5 70v3M265.5 70v3M280.5 70v3M295.5 70v3M309.5 70v3M324.5 70v3M339.5 70v3M353.5 70v3M368.5 70v3M383.5 70v3M397.5 70v3M412.5 70v3M427.5 70v3M442.5 70v3M456.5 70v3M471.5 70v3M486.5 70v3M500.5 70v3M515.5 70v3M530.5 70v3M544.5 70v3M559.5 70v3M574.5 70v3M588.5 70v3M603.5 70v3M618.5 70v3M632.5 70v3M647.5 70v3M662.5 70v3M677.5 70v3M691.5 70v3M706.5 70v3M721.5 70v3M735.5 70v3M750.5 70v3M765.5 70v3M779.5 70v3M794.5 70v3M809.5 70v3M823.5 70v3M838.5 70v3M853.5 70v3M867.5 70v3M882.5 70v3M897.5 70v3M912.5 70v3M926.5 70v3M941.5 70v3M956.5 70v3M970.5 70v3M985.5 70v3M1000.5 70v3M1014.5 69v3M1029.5 69v3M1044.5 71v3M1058.5 71v3M1073.5 70v3M1088.5 68v3M1102.5 70v3M1117.5 78v3M1132.5 87v3M1147.5 90v3M1161.5 85v3M1176.5 76v3M1191.5 69v3M1205.5 68v3" stroke="#3438c6" stroke-width="1" fill="none" shape-rendering="crispEdges"/></svg><svg class="a" style="left:132px;top:155px" width="1211" height="143"><rect x="0" y="71" width="1211" height="1" fill="#000" shape-rendering="crispEdges"/><polyline points="0,71.5 1.5,71.5 16.5,71.5 30.5,71.5 45.5,71.5 60.5,71.5 74.5,71.5 89.5,71.5 104.5,71.5 118.5,71.5 133.5,71.5 148.5,71.5 162.5,71.5 177.5,71.5 192.5,71.5 207.5,71.5 221.5,71.5 236.5,71.5 251.5,71.5 265.5,71.5 280.5,71.5 295.5,71.5 309.5,71.5 324.5,71.5 339.5,71.5 353.5,71.5 368.5,71.5 383.5,71.5 397.5,71.5 412.5,71.5 427.5,71.5 442.5,71.5 456.5,71.5 471.5,71.5 486.5,71.5 500.5,71.5 515.5,71.5 530.5,71.5 544.5,71.5 559.5,71.5 574.5,71.5 588.5,71.5 603.5,71.5 618.5,71.5 632.5,71.5 647.5,71.5 662.5,71.5 677.5,71.5 691.5,71.5 706.5,71.5 721.5,71.5 735.5,71.5 750.5,71.5 765.5,71.5 779.5,71.5 794.5,71.5 809.5,71.5 823.5,71.5 838.5,71.5 853.5,71.5 867.5,71.5 882.5,71.5 897.5,71.5 912.5,71.5 926.5,71.5 941.5,71.5 956.5,71.5 970.5,71.5 985.5,71.5 1000.5,71.5 1014.5,71.5 1029.5,71.5 1044.5,71.5 1058.5,71.5 1073.5,71.5 1088.5,71.5 1102.5,71.5 1117.5,71.5 1132.5,71.5 1147.5,71.5 1161.5,71.5 1176.5,71.5 1191.5,71.5 1205.5,71.5 1211.5,71.5" fill="none" stroke="#3438c6" stroke-width="1" shape-rendering="crispEdges"/><path d="M1.5 70v3M16.5 70v3M30.5 70v3M45.5 70v3M60.5 70v3M74.5 70v3M89.5 70v3M104.5 70v3M118.5 70v3M133.5 70v3M148.5 70v3M162.5 70v3M177.5 70v3M192.5 70v3M207.5 70v3M221.5 70v3M236.5 70v3M251.5 70v3M265.5 70v3M280.5 70v3M295.5 70v3M309.5 70v3M324.5 70v3M339.5 70v3M353.5 70v3M368.5 70v3M383.5 70v3M397.5 70v3M412.5 70v3M427.5 70v3M442.5 70v3M456.5 70v3M471.5 70v3M486.5 70v3M500.5 70v3M515.5 70v3M530.5 70v3M544.5 70v3M559.5 70v3M574.5 70v3M588.5 70v3M603.5 70v3M618.5 70v3M632.5 70v3M647.5 70v3M662.5 70v3M677.5 70v3M691.5 70v3M706.5 70v3M721.5 70v3M735.5 70v3M750.5 70v3M765.5 70v3M779.5 70v3M794.5 70v3M809.5 70v3M823.5 70v3M838.5 70v3M853.5 70v3M867.5 70v3M882.5 70v3M897.5 70v3M912.5 70v3M926.5 70v3M941.5 70v3M956.5 70v3M970.5 70v3M985.5 70v3M1000.5 70v3M1014.5 70v3M1029.5 70v3M1044.5 70v3M1058.5 70v3M1073.5 70v3M1088.5 70v3M1102.5 70v3M1117.5 70v3M1132.5 70v3M1147.5 70v3M1161.5 70v3M1176.5 70v3M1191.5 70v3M1205.5 70v3" stroke="#3438c6" stroke-width="1" fill="none" shape-rendering="crispEdges"/></svg>
<div class="a" style="left:5px;top:5px;width:95px;height:1px;background:#fff"></div>
<div class="a" style="left:5px;top:5px;width:1px;height:15px;background:#fff"></div>
<div class="a" style="left:19px;top:5px;width:1px;height:15px;background:#9a9a9a"></div>
<div class="a" style="left:20px;top:6px;width:1px;height:14px;background:#fff"></div>
<div class="a" style="left:99px;top:5px;width:1px;height:15px;background:#9a9a9a"></div>
<div class="a" style="left:5px;top:19px;width:95px;height:2px;background:#9a9a9a"></div>
<svg class="a" style="left:8px;top:8px" width="10" height="9"><path d="M1 1 L8 8 M8 1 L1 8" stroke="#000" stroke-width="1.3"/></svg>
<div class="a il" style="left:23px;top:7px">Zvuková st</div>
<svg class="a" style="left:84px;top:8px" width="13" height="8"><path d="M0.5 0.5 H12 L6.2 7Z" fill="#000"/></svg>
<div class="a il" style="left:8px;top:23px;letter-spacing:-0.08px">Stereo, 96000Hz</div>
<div class="a il" style="left:8px;top:39px">32-bit float</div>
<div class="a" style="left:5px;top:54px;width:95px;height:1px;background:#9a9a9a"></div>
<div class="a ib" style="left:5px;top:55px;width:47px;height:15px;letter-spacing:-0.45px">Umlčet</div>
<div class="a ib" style="left:53px;top:55px;width:47px;height:15px;letter-spacing:-0.3px">Solo</div>
<div class="a ib" style="left:24px;top:281px;width:61px;height:17px;border-bottom:none"></div>
<svg class="a" style="left:48px;top:286px" width="13" height="8"><path d="M1 7 H12 L6.5 1Z" fill="#9a9ab0" stroke="#222" stroke-width="1"/></svg>
<svg class="a" style="left:86px;top:282px" width="14" height="14"><circle cx="6.7" cy="7.5" r="5" fill="#fff" stroke="#000" stroke-width="1.3"/><path d="M6.7 1 v1.5" stroke="#000" stroke-width="2"/><path d="M5 5 L6.7 8 L9 6.5" stroke="#2020c0" stroke-width="1.2" fill="none"/></svg>
<div class="a" style="left:16px;top:91px;width:77px;height:1px;background:#a0a0a0"></div><div class="a" style="left:16px;top:85px;width:1px;height:6px;background:#ececf4"></div><div class="a" style="left:23px;top:87px;width:1px;height:4px;background:#ececf4"></div><div class="a" style="left:30px;top:87px;width:1px;height:4px;background:#ececf4"></div><div class="a" style="left:38px;top:87px;width:1px;height:4px;background:#ececf4"></div><div class="a" style="left:45px;top:87px;width:1px;height:4px;background:#ececf4"></div><div class="a" style="left:52px;top:87px;width:1px;height:4px;background:#ececf4"></div><div class="a" style="left:60px;top:87px;width:1px;height:4px;background:#ececf4"></div><div class="a" style="left:67px;top:87px;width:1px;height:4px;background:#ececf4"></div><div class="a" style="left:74px;top:87px;width:1px;height:4px;background:#ececf4"></div><div class="a" style="left:81px;top:87px;width:1px;height:4px;background:#ececf4"></div><div class="a" style="left:88px;top:85px;width:1px;height:6px;background:#ececf4"></div><svg class="a" style="left:48px;top:83px" width="12" height="15" viewBox="0 0 12 15"><path d="M2.5 0.75 H8.5 Q10.25 0.75 10.25 2.5 V9 L5.5 13.6 L0.75 9 V2.5 Q0.75 0.75 2.5 0.75Z" fill="url(#tg)" stroke="#000" stroke-width="1.3"/><path d="M3.5 4.5h4M3.5 7.5h4" stroke="#e8e8f6" stroke-width="1"/></svg><div class="a" style="left:16px;top:80px;width:5px;height:1px;background:#000"></div><svg class="a" style="left:84px;top:78px" width="5" height="5"><path d="M0 2.5h5M2.5 0v5" stroke="#000" stroke-width="1"/></svg><div class="a" style="left:16px;top:121px;width:77px;height:1px;background:#a0a0a0"></div><div class="a" style="left:16px;top:115px;width:1px;height:6px;background:#ececf4"></div><div class="a" style="left:23px;top:117px;width:1px;height:4px;background:#ececf4"></div><div class="a" style="left:30px;top:117px;width:1px;height:4px;background:#ececf4"></div><div class="a" style="left:38px;top:117px;width:1px;height:4px;background:#ececf4"></div><div class="a" style="left:45px;top:117px;width:1px;height:4px;background:#ececf4"></div><div class="a" style="left:52px;top:117px;width:1px;height:4px;background:#ececf4"></div><div class="a" style="left:60px;top:117px;width:1px;height:4px;background:#ececf4"></div><div class="a" style="left:67px;top:117px;width:1px;height:4px;background:#ececf4"></div><div class="a" style="left:74px;top:117px;width:1px;height:4px;background:#ececf4"></div><div class="a" style="left:81px;top:117px;width:1px;height:4px;background:#ececf4"></div><div class="a" style="left:88px;top:115px;width:1px;height:6px;background:#ececf4"></div><svg class="a" style="left:48px;top:113px" width="12" height="15" viewBox="0 0 12 15"><path d="M2.5 0.75 H8.5 Q10.25 0.75 10.25 2.5 V9 L5.5 13.6 L0.75 9 V2.5 Q0.75 0.75 2.5 0.75Z" fill="url(#tg)" stroke="#000" stroke-width="1.3"/><path d="M3.5 4.5h4M3.5 7.5h4" stroke="#e8e8f6" stroke-width="1"/></svg><div class="a" style="left:16px;top:104px;font-size:10px;line-height:11px">L</div><div class="a" style="left:83px;top:104px;font-size:10px;line-height:11px">P</div><div class="a" style="left:1349px;top:0;width:3px;height:475px;background:#f0f0f0"></div><div class="a" style="left:1349px;top:0;width:1px;height:475px;background:#fff"></div><div class="a" style="left:1351px;top:0;width:1px;height:475px;background:#fafafa"></div></div>

<!-- BOTTOM -->
<div id="bottom" class="a" style="left:0;top:608px;width:1352px;height:96px">
<style>.dg{font-size:13px;line-height:15px;color:#1a1ab8;text-align:center}.sl{font-size:12px;line-height:14px;white-space:nowrap}</style>
<!-- h scrollbar -->
<div class="a" style="left:0;top:0;width:1349px;height:1px;background:#9a9a9a"></div>
<div class="a" style="left:0;top:1px;width:1349px;height:17px;background:linear-gradient(#fbfbfb 0,#ececec 3px,#ececec 13px,#f0f0f0 17px)"></div>
<div class="a" style="left:136px;top:2px;width:17px;height:15px;background:#f2f2f2"></div>
<svg class="a" style="left:141px;top:6px" width="6" height="8"><path d="M5 0.3 V7.2 L0.8 3.75Z" fill="#000"/></svg>
<svg class="a" style="left:1338px;top:6px" width="6" height="8"><path d="M1 0.3 V7.2 L5.2 3.75Z" fill="#000"/></svg>
<div class="a" style="left:663px;top:2px;width:15px;height:15px;border:1px solid #8f8f8f;border-radius:2px;background:linear-gradient(#f3f3f3 0,#e7e7e9 48%,#d0d0d4 52%,#d9d9dd 100%);box-shadow:inset 0 0 0 1px rgba(255,255,255,.5)"></div>
<!-- selection toolbar -->
<div class="a" style="left:0;top:18px;width:1352px;height:1px;background:#a0a0a0"></div>
<div class="a" style="left:0;top:19px;width:1px;height:55px;background:#a0a0a0"></div>
<div class="a grab" style="left:4px;top:23px;width:4px;height:48px"></div>
<div class="a" style="left:10px;top:19px;width:1px;height:55px;background:#b8b8b8"></div>
<div class="a" style="left:1px;top:19px;width:1px;height:55px;background:#fff"></div><div class="a" style="left:11px;top:19px;width:1px;height:55px;background:#fff"></div><div class="a" style="left:1px;top:19px;width:9px;height:1px;background:#fff"></div><div class="a" style="left:11px;top:19px;width:1341px;height:1px;background:#fff"></div><div class="a" style="left:0;top:74px;width:1352px;height:1px;background:#a0a0a0"></div>
<div class="a" style="left:0;top:75px;width:1352px;height:1px;background:#c4c4c4"></div>
<div class="a sl" style="left:12px;top:26px;letter-spacing:-0.25px">Vzorkování (Hz):</div>
<div class="a" style="left:12px;top:43px;width:80px;height:22px;background:#fff;border:1px solid #e3e3e3;border-radius:2px"></div>
<div class="a sl" style="left:18px;top:47px">96000</div>
<svg class="a" style="left:79px;top:53px" width="9" height="5"><path d="M0.6 0.3 H8 L4.3 4.5Z" fill="#000"/></svg>
<div class="a" style="left:104px;top:41px;width:1px;height:26px;background:#a0a0a0"></div>
<div class="a sl" style="left:114px;top:48px">Přilínaní</div>
<div class="a" style="left:162px;top:48px;width:13px;height:13px;border:1px solid #8e8f8f;background:linear-gradient(135deg,#dcdcdc 0%,#f6f6f6 100%);box-shadow:inset 0 0 0 1px #f4f4f4"></div>
<div class="a sl" style="left:181px;top:26px;letter-spacing:-0.1px">Začátek výběru:</div>
<div class="a" style="left:181px;top:43px;width:151px;height:21px;background:#c0c0c0;border-top:1px solid #696969;border-left:1px solid #696969;border-right:1px solid #fff;border-bottom:1px solid #fff;box-shadow:inset 1px 1px 0 #a0a0a0"></div><div class="a dg" style="left:184px;top:47px;width:10px">0</div><div class="a dg" style="left:194px;top:47px;width:10px">0</div><div class="a dg" style="left:204px;top:47px;width:10px">0</div><div class="a dg" style="left:212px;top:47px;width:6px;color:#000">,</div><div class="a dg" style="left:218px;top:47px;width:10px">3</div><div class="a dg" style="left:228px;top:47px;width:10px">4</div><div class="a dg" style="left:238px;top:47px;width:10px">8</div><div class="a dg" style="left:246px;top:47px;width:6px;color:#000">,</div><div class="a dg" style="left:252px;top:47px;width:10px">7</div><div class="a dg" style="left:262px;top:47px;width:10px">5</div><div class="a dg" style="left:272px;top:47px;width:10px">1</div><div class="a" style="left:286px;top:48px;font-size:12px;line-height:14px;letter-spacing:-0.3px;white-space:nowrap">vzorků</div><div class="a" style="left:322px;top:45px;width:9px;height:18px;background:#c0c0c0;border-top:1px solid #fff;border-left:1px solid #fff;border-right:1px solid #696969;border-bottom:1px solid #696969"><svg class="a" style="left:0;top:6px" width="8" height="5"><path d="M0.5 0.3 H7 L3.75 4.3Z" fill="#000"/></svg></div>
<div class="a" style="left:339px;top:27px;width:12px;height:12px;border-radius:50%;border:1px solid #8e8f8f;background:radial-gradient(circle at 60% 60%,#fff 0,#f0f0f0 50%,#d8d8d8 100%)"></div>
<div class="a sl" style="left:355px;top:26px">Konec</div>
<div class="a" style="left:398px;top:27px;width:12px;height:12px;border-radius:50%;border:1px solid #7b8794;background:radial-gradient(circle at 50% 50%,#1a5fa8 0,#2f86c8 2.2px,#bfe0f4 3.4px,#e8eef2 4.2px,#dfe4e8 100%)"></div>
<div class="a sl" style="left:414px;top:26px">Délka</div>
<div class="a" style="left:339px;top:43px;width:151px;height:21px;background:#c0c0c0;border-top:1px solid #696969;border-left:1px solid #696969;border-right:1px solid #fff;border-bottom:1px solid #fff;box-shadow:inset 1px 1px 0 #a0a0a0"></div><div class="a dg" style="left:342px;top:47px;width:10px">0</div><div class="a dg" style="left:352px;top:47px;width:10px">0</div><div class="a dg" style="left:362px;top:47px;width:10px">0</div><div class="a dg" style="left:370px;top:47px;width:6px;color:#000">,</div><div class="a dg" style="left:376px;top:47px;width:10px">0</div><div class="a dg" style="left:386px;top:47px;width:10px">0</div><div class="a dg" style="left:396px;top:47px;width:10px">0</div><div class="a dg" style="left:404px;top:47px;width:6px;color:#000">,</div><div class="a dg" style="left:410px;top:47px;width:10px">0</div><div class="a dg" style="left:420px;top:47px;width:10px">7</div><div class="a dg" style="left:430px;top:47px;width:10px">5</div><div class="a" style="left:444px;top:48px;font-size:12px;line-height:14px;letter-spacing:-0.3px;white-space:nowrap">vzorků</div><div class="a" style="left:480px;top:45px;width:9px;height:18px;background:#c0c0c0;border-top:1px solid #fff;border-left:1px solid #fff;border-right:1px solid #696969;border-bottom:1px solid #696969"><svg class="a" style="left:0;top:6px" width="8" height="5"><path d="M0.5 0.3 H7 L3.75 4.3Z" fill="#000"/></svg></div>
<div class="a" style="left:497px;top:41px;width:1px;height:26px;background:#a0a0a0"></div>
<div class="a sl" style="left:504px;top:26px">Pozice:</div>
<div class="a" style="left:504px;top:43px;width:151px;height:21px;background:#c0c0c0;border-top:1px solid #696969;border-left:1px solid #696969;border-right:1px solid #fff;border-bottom:1px solid #fff;box-shadow:inset 1px 1px 0 #a0a0a0"></div><div class="a dg" style="left:507px;top:47px;width:10px">0</div><div class="a dg" style="left:517px;top:47px;width:10px">0</div><div class="a dg" style="left:527px;top:47px;width:10px">0</div><div class="a dg" style="left:535px;top:47px;width:6px;color:#000">,</div><div class="a dg" style="left:541px;top:47px;width:10px">0</div><div class="a dg" style="left:551px;top:47px;width:10px">0</div><div class="a dg" style="left:561px;top:47px;width:10px">0</div><div class="a dg" style="left:569px;top:47px;width:6px;color:#000">,</div><div class="a dg" style="left:575px;top:47px;width:10px">0</div><div class="a dg" style="left:585px;top:47px;width:10px">0</div><div class="a dg" style="left:595px;top:47px;width:10px">0</div><div class="a" style="left:609px;top:48px;font-size:12px;line-height:14px;letter-spacing:-0.3px;white-space:nowrap">vzorků</div><div class="a" style="left:645px;top:45px;width:9px;height:18px;background:#c0c0c0;border-top:1px solid #fff;border-left:1px solid #fff;border-right:1px solid #696969;border-bottom:1px solid #696969"><svg class="a" style="left:0;top:6px" width="8" height="5"><path d="M0.5 0.3 H7 L3.75 4.3Z" fill="#000"/></svg></div>
<!-- status bar -->
<div class="a" style="left:0;top:76px;width:1352px;height:20px;background:#f0edec"></div>
<div class="a" style="left:1176px;top:78px;width:1px;height:18px;background:#d6d2d0"></div>
<div class="a" style="left:1177px;top:78px;width:1px;height:18px;background:#fff"></div>
<div class="a sl" style="left:3px;top:81px;letter-spacing:-0.09px" id="st1">Část zvukové stopy označte kliknutím a tahem myší</div>
<div class="a sl" style="left:1182px;top:81px;letter-spacing:-0.4px" id="st2">Současné vzorkování: 96000</div>
</div>
</body>
</html>
